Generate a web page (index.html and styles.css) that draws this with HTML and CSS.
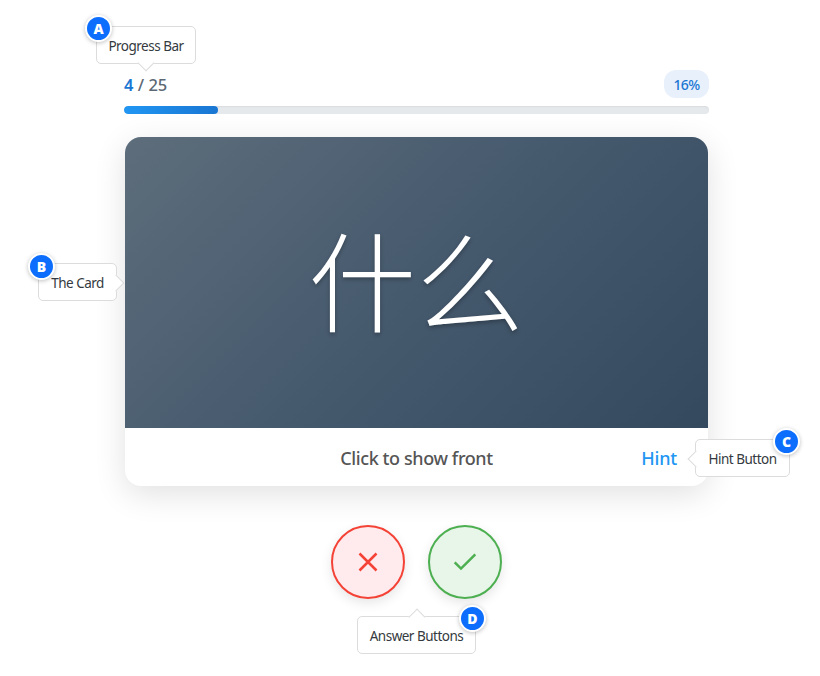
FILE: index.html
```html
<!DOCTYPE html>
<html lang="en">
<head>
    <meta charset="UTF-8">
    <meta name="viewport" content="width=device-width, initial-scale=1.0">
    <title>Flashcards</title>
    <link rel="stylesheet" href="styles.css">
</head>
<body>

    <div class="container">
        <div class="progress">
            <div class="progress-info">
                <div class="counter"><span class="current">4</span> / 25</div>
                <div class="percent"><span>16%</span></div>
            </div>
            <div class="progress-bar">
                <div class="progress-fill" style="width: 16%"></div>
            </div>
            <div class="callout callout-progress"><span class="label">Progress Bar</span><span class="badge">A</span></div>
        </div>

        <div class="card">
            <div class="card-face"><span class="word" lang="zh">什么</span></div>
            <div class="card-footer">
                <span class="flip">Click to show front</span>
                <span class="hint">Hint</span>
            </div>
            <div class="callout callout-card"><span class="label">The Card</span><span class="badge">B</span></div>
            <div class="callout callout-hint"><span class="label">Hint Button</span><span class="badge">C</span></div>
        </div>

        <div class="answers">
            <button class="answer wrong" aria-label="Wrong">
                <svg width="20" height="20" viewBox="0 0 20 20"><path d="M1.5 1.5L18.5 18.5M18.5 1.5L1.5 18.5"/></svg>
            </button>
            <button class="answer right" aria-label="Right">
                <svg width="24" height="20" viewBox="0 0 24 20"><path d="M1.7 10.3L8 16.6L22.3 2.3"/></svg>
            </button>
            <div class="callout callout-answers"><span class="label">Answer Buttons</span><span class="badge">D</span></div>
        </div>
    </div>

</body>
</html>
```
FILE: styles.css
```css
* {
    box-sizing: border-box;
}
body {
    margin: 0;
    background-color: #fff;
    font-family: "Noto Sans", "Open Sans", sans-serif;
}
.container {
    width: 585px;
    height: 676px;
    margin-left: 124px;
    padding-top: 70px;
}
.progress,
.card,
.answers {
    position: relative;
}
.progress-info {
    display: flex;
    justify-content: space-between;
    align-items: center;
    height: 28px;
    margin-bottom: 8px;
}
.counter {
    font-size: 16.5px;
    font-weight: 500;
    color: #5c6873;
    padding-top: 1px;
}
.current {
    color: #1976d2;
    font-weight: 600;
}
.percent {
    display: flex;
    align-items: center;
    justify-content: center;
    width: 45px;
    height: 28px;
    border-radius: 12px;
    background-color: #e8f0fc;
    color: #1976d2;
    font-size: 14px;
    font-weight: 500;
    letter-spacing: -0.6px;
    padding-top: 1px;
}
.progress-bar {
    height: 8px;
    border-radius: 4px;
    background-color: #e6e9ec;
    box-shadow: inset 0 1px 2px rgba(0, 0, 0, 0.06);
    overflow: hidden;
}
.progress-fill {
    height: 100%;
    border-radius: 4px;
    background: linear-gradient(90deg, #2196f3, #1976d2);
}
.card {
    width: 583px;
    height: 349px;
    margin: 23px 1px 0;
    border-radius: 16px;
    background-color: #fff;
    box-shadow: 0 8px 32px rgba(0, 0, 0, 0.12);
}
.card-face {
    display: flex;
    align-items: center;
    justify-content: center;
    height: 291px;
    padding: 0 1px 11px 0;
    border-radius: 16px 16px 0 0;
    background: linear-gradient(135deg, #5d6d7b, #465a6e 50%, #34495e);
}
.word {
    font-family: "Noto Sans CJK SC", sans-serif;
    font-size: 108px;
    font-weight: 300;
    line-height: 1;
    color: #fff;
    text-shadow: 0 2px 4px rgba(0, 0, 0, 0.3);
}
.card-footer {
    display: grid;
    grid-template-columns: 1fr auto 1fr;
    align-items: center;
    height: 58px;
    padding: 2px 31px 0;
    font-size: 18px;
    font-weight: 500;
    letter-spacing: -0.4px;
}
.flip {
    grid-column: 2;
    color: #555;
}
.hint {
    justify-self: end;
    color: #2196f3;
    letter-spacing: -0.2px;
}
.answers {
    display: flex;
    justify-content: center;
    gap: 23px;
    margin-top: 39px;
}
.answer {
    display: flex;
    align-items: center;
    justify-content: center;
    width: 74px;
    height: 74px;
    padding: 0;
    border: 2px solid;
    border-radius: 50%;
    box-shadow: 0 4px 12px rgba(0, 0, 0, 0.1);
}
.answer svg {
    fill: none;
    stroke: currentColor;
    stroke-width: 2.5;
}
.wrong {
    color: #f44336;
    background-color: #ffebee;
}
.right {
    color: #4caf50;
    background-color: #e8f5e9;
}

/* callouts */
.callout {
    position: absolute;
    display: flex;
    align-items: center;
    justify-content: center;
    height: 38px;
    padding-top: 1px;
    border: 1px solid #dcdcdc;
    border-radius: 5px;
    background-color: #fff;
    color: #343a40;
    font-size: 13.5px;
    letter-spacing: -0.5px;
    white-space: nowrap;
}
.callout::before {
    content: "";
    position: absolute;
    width: 11px;
    height: 11px;
    background-color: #fff;
    border: solid #dcdcdc;
    border-width: 0 1px 1px 0;
}
.badge {
    position: absolute;
    display: flex;
    align-items: center;
    justify-content: center;
    width: 27px;
    height: 27px;
    border: 2px solid #fff;
    border-radius: 50%;
    background-color: #0d6efd;
    box-shadow: 0 1px 4px rgba(0, 0, 0, 0.25);
    color: #fff;
    font-size: 14px;
    font-weight: 900;
    letter-spacing: 0;
}
.callout-progress {
    left: -28px;
    top: -44px;
    width: 100px;
}
.callout-progress::before {
    left: 43px;
    bottom: -6px;
    transform: rotate(45deg);
}
.callout-card {
    left: -87px;
    top: 126px;
    width: 79px;
}
.callout-card::before {
    right: -6px;
    top: 13px;
    transform: rotate(-45deg);
}
.callout-hint {
    left: 570px;
    top: 302px;
    width: 95px;
}
.callout-hint::before {
    left: -6px;
    top: 13px;
    transform: rotate(135deg);
}
.callout-answers {
    left: 233px;
    top: 91px;
    width: 119px;
}
.callout-answers::before {
    left: 53px;
    top: -6px;
    transform: rotate(225deg);
}
.callout-progress .badge,
.callout-card .badge {
    left: -12px;
    top: -12px;
}
.callout-card .badge {
    left: -11px;
    top: -11px;
}
.callout-hint .badge,
.callout-answers .badge {
    right: -11px;
    top: -12px;
}
```
